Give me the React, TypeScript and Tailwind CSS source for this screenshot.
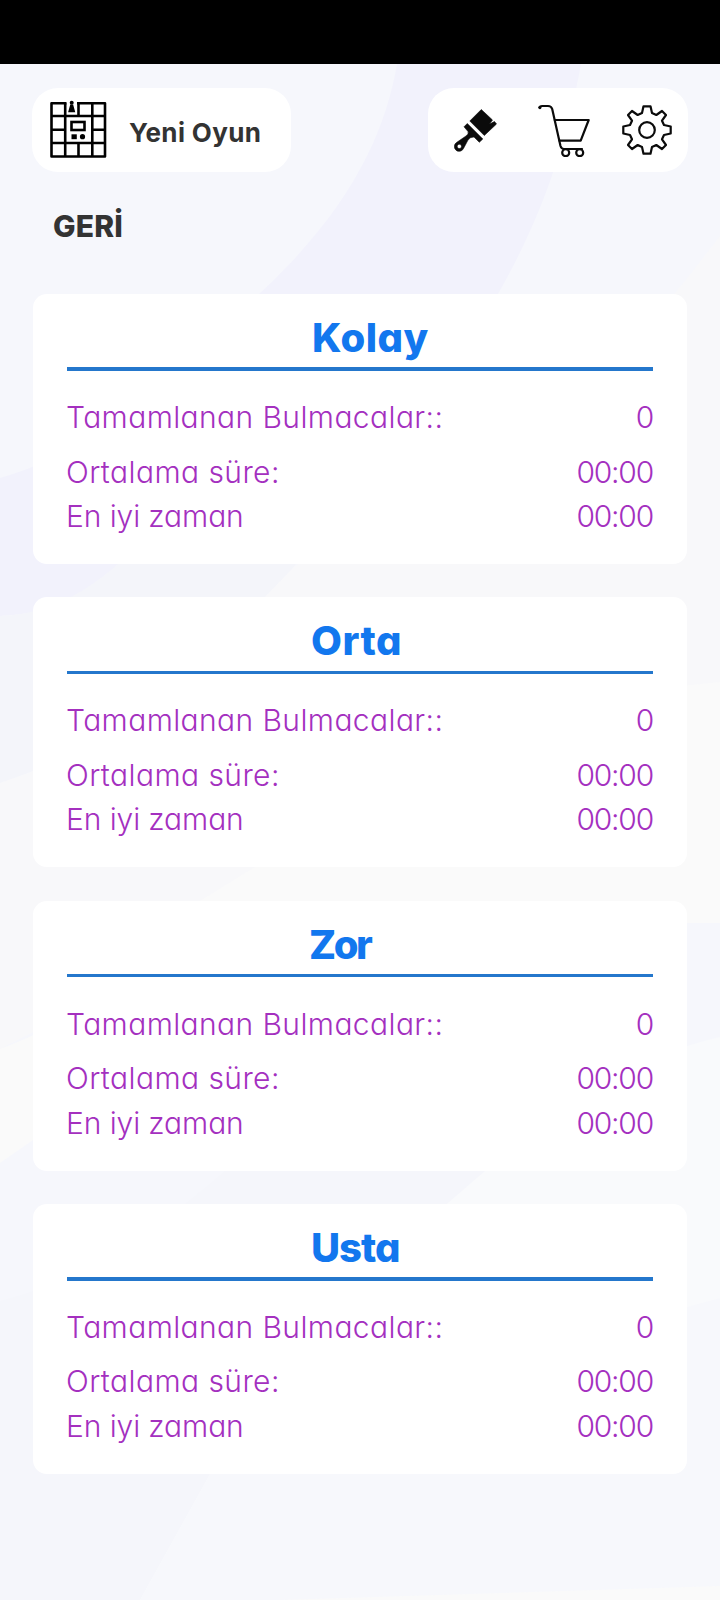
const LEVELS = [
  { title: "Kolay", titleClass: "pl-[245px] tracking-[0.5px]", solved: "0", average: "00:00", best: "00:00" },
  { title: "Orta", titleClass: "pl-[244px] tracking-[0.5px]", solved: "0", average: "00:00", best: "00:00" },
  { title: "Zor", titleClass: "pl-[242px] tracking-[-2.4px]", solved: "0", average: "00:00", best: "00:00" },
  { title: "Usta", titleClass: "pl-[244px] tracking-[-1px]", solved: "0", average: "00:00", best: "00:00" },
];

// soft diagonal bands behind the cards
function Backdrop() {
  return (
    <svg viewBox="0 64 720 1536" className="absolute inset-0 h-full w-full" aria-hidden="true">
      <rect y="64" width="720" height="1536" fill="#f6f7fc" />
      <path d="M397 64C385 134 350 210 259 294C190 370 100 450 0 478V616C250 600 430 430 498 294C540 220 565 150 581 64Z" fill="#f2f2fc" />
      <path d="M0 616C60 614 110 580 160 520L400 400L294 567L265 597C190 690 100 750 0 783Z" fill="#f4f5fa" />
      <path d="M720 236C700 262 690 275 675 293L294 567L265 597C190 690 100 750 0 783V1049L720 682Z" fill="#f8f8fa" />
      <path d="M720 682C520 700 360 780 255 867L200 901C140 970 80 1020 0 1049V1163L33 1140C100 1060 160 1000 220 923H720Z" fill="#fafafa" />
      <path d="M0 1301C120 1270 220 1180 300 1100L485 1171L210 1474L140 1600H0Z" fill="#f5f6fb" />
      <path d="M720 1037C620 1060 540 1120 485 1171L448 1203C350 1290 270 1370 210 1474L140 1600H720Z" fill="#f9fafc" />
      <path d="M720 1298C600 1330 400 1400 210 1474L140 1600H720Z" fill="#f7f8fc" />
      <path d="M720 1586L280 1600H720Z" fill="#fafafa" />
    </svg>
  );
}

function BoardIcon() {
  return (
    <svg viewBox="0 0 60 60" className="h-[60px] w-[60px]" fill="none" stroke="#000" strokeWidth="2.6">
      <path d="M18.500 3.300H3.500V56.500H57V3.300H29" strokeLinejoin="round" />
      <path d="M3.500 16H57M3.500 43H57M17.200 3.300V56.500M44.300 3.300V56.500M30.500 3.300V16M30.500 43V56.500M3.500 29.800H17M44.500 29.800H57" />
      <rect x="23.500" y="22" width="13" height="8" />
      <path d="M23.500 34.300h5.300v4.900h-5.300z" fill="#000" stroke="none" />
      <circle cx="34.500" cy="36.700" r="2.600" fill="#000" stroke="none" />
      <circle cx="23.700" cy="2.800" r="2" fill="#000" stroke="none" />
      <path d="M22.300 4.500h2.800l2.200 7.700h-7.200z" fill="#000" stroke="none" />
    </svg>
  );
}

function BrushIcon() {
  return (
    <svg viewBox="0 0 44 44" className="h-11 w-11" fill="#0b0b0b" stroke="#0b0b0b" strokeWidth="0.6" strokeLinejoin="round">
      <path d="M27.300 1.500L38.500 12L35.500 16L40.500 13.500L42.500 16L30.300 27.500L15.800 13Z" />
      <path
        fillRule="evenodd"
        d="M13.300 15.500L28.800 31L25.300 34.300L20 29Q16 29 14 32L9.500 40.500A4.800 4.800 0 1 1 2.500 34.500L12 28Q15 26 14 23.500L10 18.800ZM5.300 36.300a2.100 2.100 0 1 0 .1 0Z"
      />
    </svg>
  );
}

function CartIcon() {
  return (
    <svg viewBox="0 0 54 54" className="h-[54px] w-[54px]" fill="none" stroke="#0b0b0b" strokeWidth="2.2" strokeLinejoin="round" strokeLinecap="round">
      <path d="M2.500 4.300Q3 3 5 3H11Q14.300 3 15.200 6L23.500 43Q24.500 46 27 46H45" />
      <path d="M17.800 17H51.700L43.700 37.700H22.500" />
      <circle cx="2.900" cy="4.600" r="1.600" fill="#0b0b0b" stroke="none" />
      <circle cx="28.700" cy="49.700" r="3.500" />
      <circle cx="42.700" cy="49.700" r="3.500" />
    </svg>
  );
}

function GearIcon() {
  return (
    <svg viewBox="0 0 50 50" className="h-[50px] w-[50px]" fill="none" stroke="#0b0b0b" strokeWidth="2.2" strokeLinejoin="round">
      <path d="M21.500 1.300H28.500L30 8L34.300 10L40 6L44 10L40 15.700L42 20L48.700 21.500V28.500L42 30L40 34.300L44 40L40 44L34.300 40L30 42L28.500 48.700H21.500L20 42L15.700 40L10 44L6 40L10 34.300L8 30L1.300 28.500V21.500L8 20L10 15.700L6 10L10 6L15.700 10L20 8Z" />
      <circle cx="25" cy="25" r="7.800" />
    </svg>
  );
}

export default function App() {
  return (
    <div className="flex h-[1600px] w-[720px] flex-col overflow-hidden font-['Inter','Liberation_Sans',sans-serif] [font-feature-settings:'cv11']">
      <div className="h-16 shrink-0 bg-black" />
      <main className="relative flex-1">
        <Backdrop />
        <div className="relative">
          <header className="flex justify-between px-8 pt-6">
            <button className="flex h-[84px] w-[259px] items-center rounded-[26px] bg-white pl-4">
              <BoardIcon />
              <span className="ml-[21px] mt-1 text-[26px] font-bold tracking-[0.35px] text-[#333]">Yeni Oyun</span>
            </button>
            <div className="flex h-[84px] w-[260px] items-center rounded-[26px] bg-white pl-[26px]">
              <BrushIcon />
              <span className="ml-[39px]">
                <CartIcon />
              </span>
              <span className="ml-[31px]">
                <GearIcon />
              </span>
            </div>
          </header>
          <button className="ml-[53px] mt-[34px] block h-10 text-[30px] font-extrabold leading-10 tracking-[0.2px] text-[#333]">
            GERİ
          </button>
          <div className="ml-[33px] mt-12 flex flex-col gap-[33.3px]">
            {LEVELS.map((level) => (
              <section key={level.title} className="h-[270px] w-[654px] rounded-[14px] bg-white px-[34px] pt-[21px]">
                <h2 className={`h-[52.3px] text-[40px] font-extrabold leading-[45px] text-[#1277ee] ${level.titleClass}`}>
                  {level.title}
                </h2>
                <div className="h-[3.35px] bg-[#2477cc]" />
                <dl className="text-[30px] font-light leading-[44px] text-[#a430bf]">
                  <div className="flex justify-between pt-[24.35px]">
                    <dt className="-ml-px tracking-[0.4px]">Tamamlanan Bulmacalar::</dt>
                    <dd className="tracking-[-1.2px]">{level.solved}</dd>
                  </div>
                  <div className="flex justify-between pt-[10.6px]">
                    <dt className="-ml-px tracking-[0.43px]">Ortalama süre:</dt>
                    <dd className="tracking-[-1.2px]">{level.average}</dd>
                  </div>
                  <div className="flex justify-between pt-[0.4px]">
                    <dt className="-ml-px tracking-[-0.1px]">En iyi zaman</dt>
                    <dd className="tracking-[-1.2px]">{level.best}</dd>
                  </div>
                </dl>
              </section>
            ))}
          </div>
        </div>
      </main>
    </div>
  );
}
